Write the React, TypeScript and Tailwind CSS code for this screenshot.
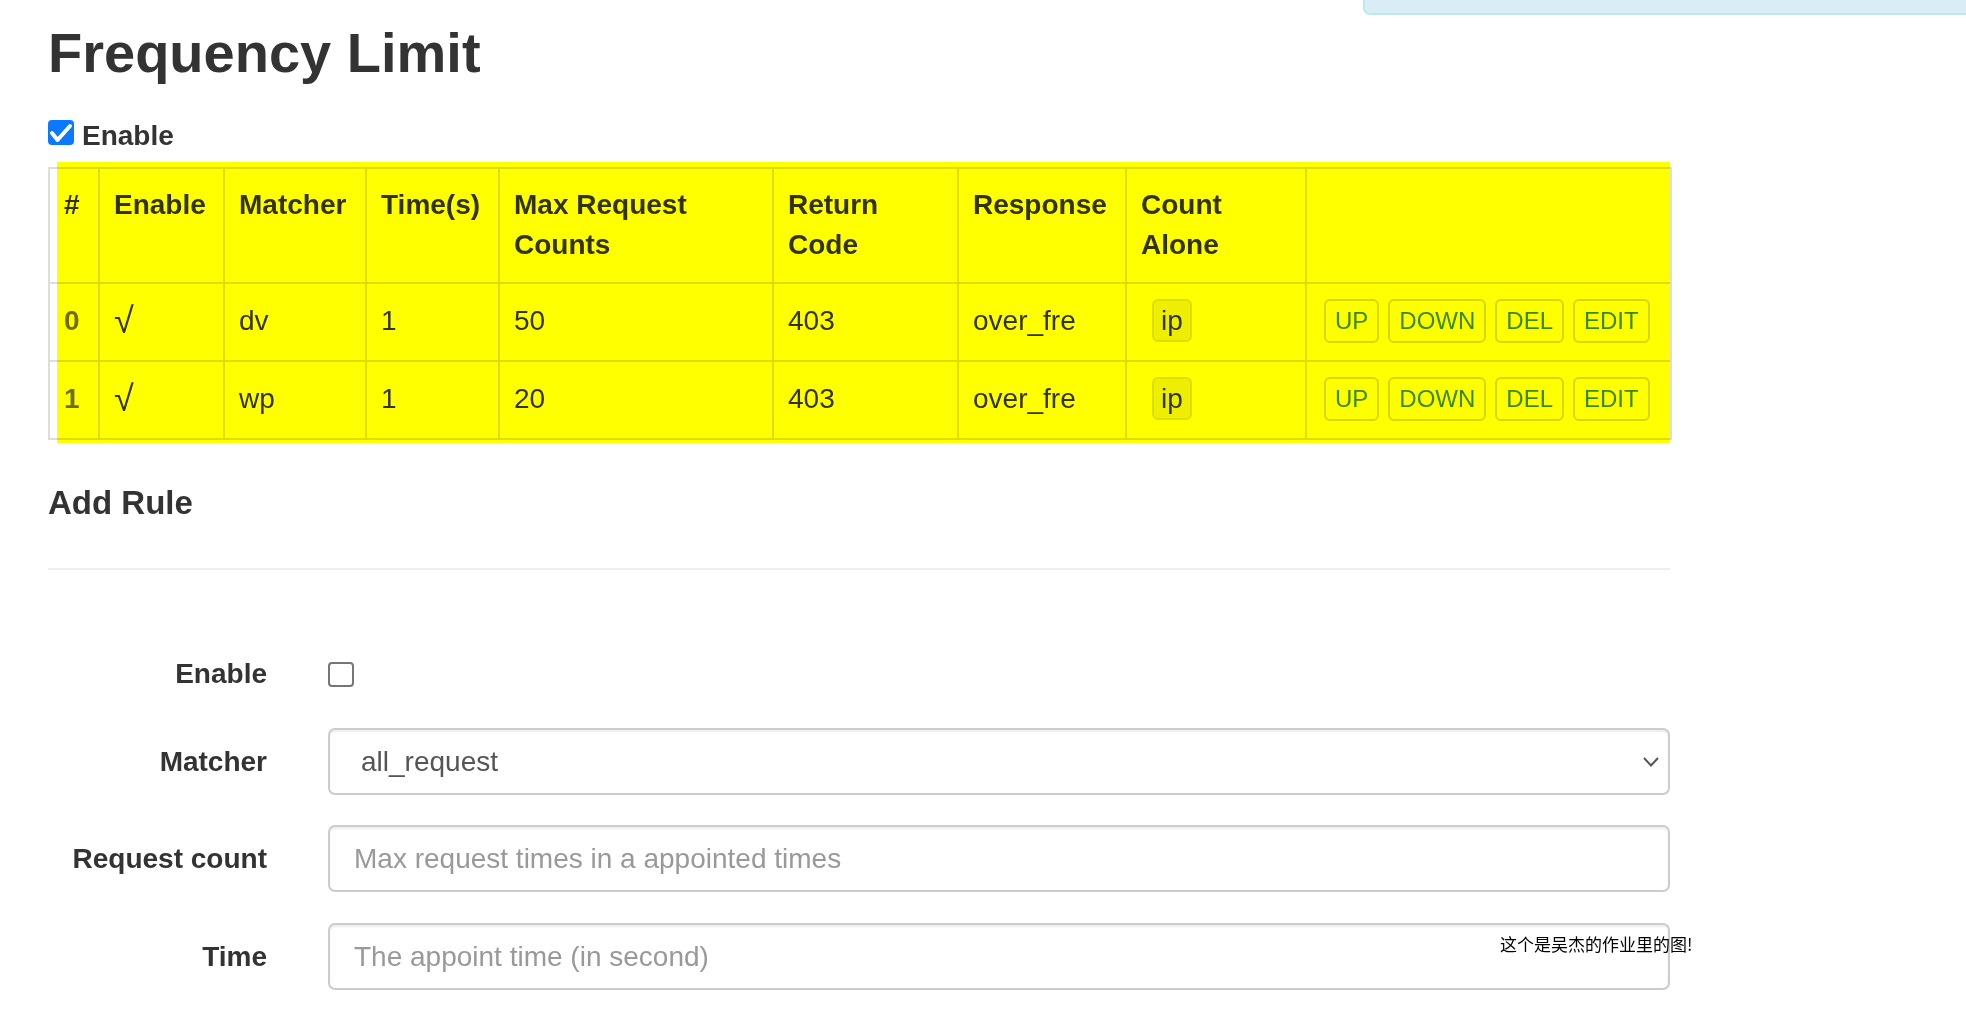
import React from 'react';

interface Rule {
  id: number;
  matcher: string;
  time: number;
  max: number;
  code: number;
  response: string;
  alone: string;
}

const rules: Rule[] = [
  { id: 0, matcher: 'dv', time: 1, max: 50, code: 403, response: 'over_fre', alone: 'ip' },
  { id: 1, matcher: 'wp', time: 1, max: 20, code: 403, response: 'over_fre', alone: 'ip' },
];

const headers = ['#', 'Enable', 'Matcher', 'Time(s)', 'Max Request Counts', 'Return Code', 'Response', 'Count Alone', ''];

const cell = 'border-2 border-[#dddddd] px-[14px] align-top text-left';
const textCell = `${cell} pt-[17px] pb-[14px]`;
const boxCell = `${cell} pt-[15px] pb-[17px]`;

const ActionButton: React.FC<{ label: string }> = ({ label }) => (
  <button className="h-[44px] inline-flex items-center px-[9px] border-2 border-[#d6d6d6] rounded-[6px] text-[24px] text-[#3a8a3a] bg-white">
    {label}
  </button>
);

const FormRow: React.FC<{ label: string; className?: string; children: React.ReactNode }> = ({ label, className, children }) => (
  <div className={`flex items-center gap-[61px] ${className ?? ''}`}>
    <label className="w-[219px] shrink-0 text-right font-bold leading-[40px]">{label}</label>
    <div className="flex-1">{children}</div>
  </div>
);

const inputBox =
  'h-[67px] w-full border-2 border-[#cccccc] rounded-[7px] shadow-[inset_0_2px_2px_rgba(0,0,0,0.075)] bg-white';

const App: React.FC = () => {
  return (
    <div className="relative min-h-screen bg-white text-[#333333] text-[28px] leading-[40px] font-['Liberation_Sans',Arial,sans-serif]">
      {/* alert peeking from the top */}
      <div className="absolute top-0 right-0 w-[603px] h-[15px] bg-[#d9edf7] border-l-2 border-b-2 border-[#bce8f1] rounded-bl-[7px]" />

      <div className="w-[1670px] pl-[48px] pt-[22px]">
        <h1 className="text-[56px] leading-[62px] font-bold">Frequency Limit</h1>

        <div className="mt-[32px] flex items-start gap-[8px]">
          <span className="mt-[4px] w-[26px] h-[25px] rounded-[4px] bg-[#0a78ff] flex items-center justify-center">
            <svg width="26" height="25" viewBox="0 0 26 25">
              <polyline points="4,13 9.5,20 22,6" fill="none" stroke="white" strokeWidth="4" strokeLinecap="round" strokeLinejoin="round" />
            </svg>
          </span>
          <span className="font-bold">Enable</span>
        </div>

        <table className="mt-[11px] table-fixed border-collapse w-[1622px] border-2 border-[#dddddd]">
          <colgroup>
            <col className="w-[50px]" />
            <col className="w-[125px]" />
            <col className="w-[142px]" />
            <col className="w-[133px]" />
            <col className="w-[274px]" />
            <col className="w-[185px]" />
            <col className="w-[168px]" />
            <col className="w-[180px]" />
            <col className="w-[365px]" />
          </colgroup>
          <thead>
            <tr>
              {headers.map((h, i) => (
                <th key={i} className={`${cell} pt-[16px] pb-[17px] font-bold`}>
                  {h}
                </th>
              ))}
            </tr>
          </thead>
          <tbody>
            {rules.map((r) => (
              <tr key={r.id}>
                <th className={`${textCell} font-bold text-[#6f6f6f]`}>{r.id}</th>
                <td className={textCell}>
                  <span className="text-[36px]">√</span>
                </td>
                <td className={textCell}>{r.matcher}</td>
                <td className={textCell}>{r.time}</td>
                <td className={textCell}>{r.max}</td>
                <td className={textCell}>{r.code}</td>
                <td className={textCell}>{r.response}</td>
                <td className={boxCell}>
                  <div className="h-[44px] flex items-start">
                    <span className="ml-[11px] h-[43px] inline-flex items-center px-[7px] rounded-[6px] bg-[#eeeeee] border-2 border-[#dddddd]">
                      {r.alone}
                    </span>
                  </div>
                </td>
                <td className={boxCell}>
                  <div className="h-[44px] flex items-start gap-[9px] pl-[3px]">
                    <ActionButton label="UP" />
                    <ActionButton label="DOWN" />
                    <ActionButton label="DEL" />
                    <ActionButton label="EDIT" />
                  </div>
                </td>
              </tr>
            ))}
          </tbody>
        </table>

        <h3 className="mt-[45px] text-[33px] leading-[36px] font-bold">Add Rule</h3>
        <hr className="mt-[47px] border-0 border-t-2 border-[#eeeeee]" />

        <div className="mt-[84px]">
          <FormRow label="Enable">
            <span className="block w-[26px] h-[25px] rounded-[4px] border-2 border-[#767676] bg-white" />
          </FormRow>

          <FormRow label="Matcher" className="mt-[34px]">
            <div className={`${inputBox} flex items-center justify-between pl-[31px] pr-[9px] text-[#555555]`}>
              <span>all_request</span>
              <svg width="16" height="10" viewBox="0 0 16 10">
                <polyline points="1,1 8,8.5 15,1" fill="none" stroke="#555555" strokeWidth="2" />
              </svg>
            </div>
          </FormRow>

          <FormRow label="Request count" className="mt-[30px]">
            <input
              className={`${inputBox} pl-[24px] text-[#555555] placeholder:text-[#999999] outline-none`}
              placeholder="Max request times in a appointed times"
            />
          </FormRow>

          <FormRow label="Time" className="mt-[31px]">
            <input
              className={`${inputBox} pl-[24px] text-[#555555] placeholder:text-[#999999] outline-none`}
              placeholder="The appoint time (in second)"
            />
          </FormRow>
        </div>
      </div>

      {/* highlighter over the rules table */}
      <div className="absolute left-[57px] top-[162px] w-[1613px] h-[281px] bg-[#ffff00] mix-blend-multiply pointer-events-none" />

      {/* note left on the screenshot */}
      <div className="absolute left-[1500px] top-[934px] text-[17px] leading-[20px] text-black font-['Noto_Sans_CJK_SC',sans-serif]">
        这个是吴杰的作业里的图!
      </div>
    </div>
  );
};

export default App;
